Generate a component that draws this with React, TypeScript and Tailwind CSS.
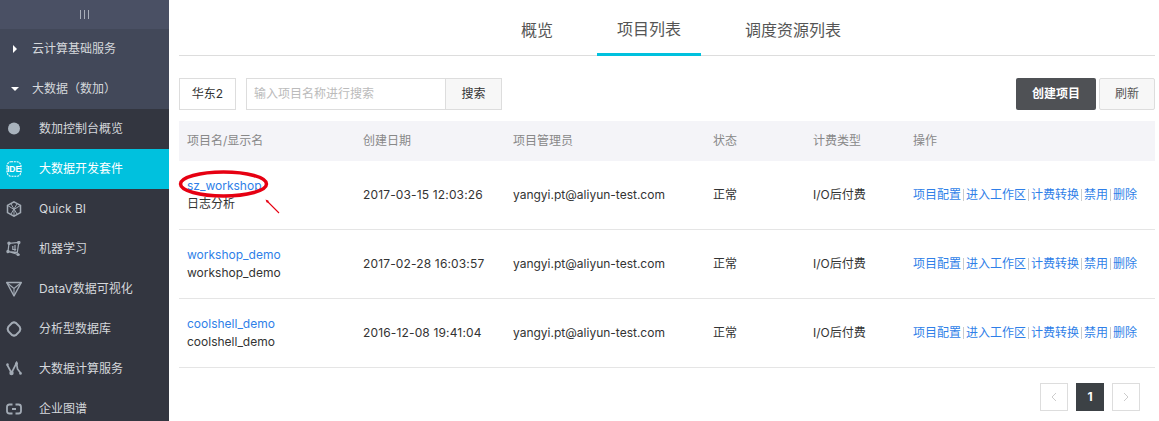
const font = { fontFamily: '"Inter", "Noto Sans CJK SC", sans-serif' }

const rows = [
  { name: 'sz_workshop', display: '日志分析', date: '2017-03-15 12:03:26' },
  { name: 'workshop_demo', display: 'workshop_demo', date: '2017-02-28 16:03:57' },
  { name: 'coolshell_demo', display: 'coolshell_demo', date: '2016-12-08 19:41:04' },
]

const actions = ['项目配置', '进入工作区', '计费转换', '禁用', '删除']

function Caret({ down }: { down?: boolean }) {
  return (
    <svg width="8" height="8" viewBox="0 0 8 8" className="shrink-0" fill="#fff">
      {down ? <path d="M0 2h8L4 6z" /> : <path d="M2 0l4 4-4 4z" />}
    </svg>
  )
}

function NavIcon({ kind }: { kind: string }) {
  const common = { fill: 'none', stroke: '#a3abb5', strokeWidth: 1.4 }
  const dot = '#a3abb5'
  if (kind === 'dot') return <svg width="16" height="16" viewBox="0 0 16 16"><circle cx="8" cy="7.500" r="6" fill="#a9b3bd" /></svg>
  if (kind === 'ide')
    return (
      <svg width="16" height="16" viewBox="0 0 16 16" fill="none" stroke="#fff" strokeWidth="1.100">
        <path d="M5 .8h6q2 0 3 1.500l1 2.200v7l-1 2.200q-1 1.500-3 1.500H5q-2 0-3-1.500L1 11.500v-7l1-2.200Q3 .8 5 .8z" strokeDasharray="2 .8" />
        <text x="8" y="10.800" textAnchor="middle" fontSize="8.500" fontWeight="700" fill="#fff" stroke="none" fontFamily="Liberation Sans, sans-serif">IDE</text>
      </svg>
    )
  if (kind === 'bi')
    return (
      <svg width="16" height="16" viewBox="0 0 16 16" fill="none" stroke={dot} strokeWidth="1.500">
        <path d="M8 .8l6.500 3.600v7.200L8 15.200l-6.500-3.600V4.400z" />
        <path d="M1.500 4.400L8 8.500l6.500-4.100M8 8.500v6.700M4.800 2.600L11.200 13.400M11.200 2.600L4.800 13.400" strokeWidth="1" />
      </svg>
    )
  if (kind === 'ml')
    return (
      <svg width="16" height="16" viewBox="0 0 16 16" {...common} strokeWidth="1.200">
        <path d="M3 2.300l9.800-.8-1.500 9.800-9.300-.8zM2 10.500l11.800 3.500M6.800 5v3.500h3.400M9 4v6" />
        <circle cx="3" cy="2.300" r="1.100" fill={dot} />
        <circle cx="12.800" cy="1.500" r="1.100" fill={dot} />
        <circle cx="2" cy="10.500" r="1.100" fill={dot} />
        <circle cx="12" cy="13.500" r="1.500" fill={dot} stroke="none" />
      </svg>
    )
  if (kind === 'datav')
    return (
      <svg width="16" height="16" viewBox="0 0 16 16" {...common}>
        <path d="M.7 1.500h14.600L8 15z" strokeLinejoin="round" />
        <path d="M.7 1.500L8 7.500l7.300-6M8 7.500V15" strokeWidth="1.100" />
      </svg>
    )
  if (kind === 'db')
    return (
      <svg width="16" height="16" viewBox="0 0 16 16" {...common} strokeWidth="2">
        <path d="M8 1.200l2 .8 3.600 3.600.8 2.400-.8 2.400L10 14l-2 .8-2-.8-3.600-3.600L1.600 8l.8-2.400L6 2z" strokeLinejoin="round" />
      </svg>
    )
  if (kind === 'calc')
    return (
      <svg width="16" height="16" viewBox="0 0 16 16" {...common} strokeWidth="1.700">
        <path d="M1 3.500l4.500 8.500L10.500 2l1 6 3.500 4.500" />
        <circle cx="5.500" cy="12" r="2.200" fill={dot} stroke="none" />
        <circle cx="10.500" cy="2.500" r="1.500" fill={dot} stroke="none" />
        <circle cx="1.500" cy="3.500" r="1.200" fill={dot} stroke="none" />
        <circle cx="14.500" cy="12.500" r="1.300" fill={dot} stroke="none" />
      </svg>
    )
  return (
    <svg width="16" height="16" viewBox="0 0 16 16" {...common} strokeWidth="1.800">
      <path d="M6.500 3.500H3.500Q1 3.500 1 6v4q0 2.500 2.500 2.500h3M9.500 3.500h3Q15 3.500 15 6v4q0 2.500-2.500 2.500h-3M6 8h4" />
    </svg>
  )
}

const navItems = [
  { label: '数加控制台概览', icon: 'dot' },
  { label: '大数据开发套件', icon: 'ide', active: true },
  { label: 'Quick BI', icon: 'bi' },
  { label: '机器学习', icon: 'ml' },
  { label: 'DataV数据可视化', icon: 'datav' },
  { label: '分析型数据库', icon: 'db' },
  { label: '大数据计算服务', icon: 'calc' },
  { label: '企业图谱', icon: 'graph' },
]

export default function App() {
  return (
    <div className="flex h-[421px] w-[1159px] overflow-hidden bg-white text-[12px] text-[#333]" style={font}>
      <aside className="w-[169px] shrink-0 bg-[#333640] text-[#d5d8dc]">
        <div className="flex h-[29px] items-center justify-center bg-[#4a5064]">
          <div className="flex gap-[3px]">
            <span className="h-[9px] w-px bg-[#a9afba]" />
            <span className="h-[9px] w-px bg-[#a9afba]" />
            <span className="h-[9px] w-px bg-[#a9afba]" />
          </div>
        </div>
        <div className="bg-[#424859]">
          <div className="flex h-[40px] items-center pl-[11px]">
            <Caret />
            <span className="ml-[13px]">云计算基础服务</span>
          </div>
          <div className="flex h-[40px] items-center pl-[11px]">
            <Caret down />
            <span className="ml-[13px]">大数据（数加）</span>
          </div>
        </div>
        {navItems.map(item => (
          <div key={item.label} className={`flex h-[40px] items-center pl-[6px] ${item.active ? 'bg-[#00c1de] text-white' : ''}`}>
            <NavIcon kind={item.icon} />
            <span className="ml-[17px]">{item.label}</span>
          </div>
        ))}
      </aside>

      <main className="relative min-w-0 flex-1 pl-[10px] pr-[4px]">
        <div className="flex h-[56px] justify-center gap-[24px] border-b border-[#ddd] pl-[28px] text-[16px] text-[#555]">
          <div className="flex h-[56px] items-center px-[20px] pt-[4px]">概览</div>
          <div className="flex h-[56px] items-center border-b-[3px] border-[#00c1de] px-[20px] pt-[4px]">项目列表</div>
          <div className="flex h-[56px] items-center px-[20px] pt-[4px]">调度资源列表</div>
        </div>

        <div className="mt-[22px] flex h-[32px] items-stretch">
          <div className="flex w-[57px] items-center justify-center border border-[#ddd]">华东2</div>
          <input
            readOnly
            placeholder="输入项目名称进行搜索"
            className="ml-[10px] w-[200px] border border-[#ddd] px-[7px] text-[12px] outline-none placeholder:text-[#bbb]"
          />
          <div className="flex w-[56px] items-center justify-center border border-l-0 border-[#ddd] bg-[#f7f7f7]">搜索</div>
          <div className="ml-auto flex w-[80px] items-center justify-center rounded-[2px] bg-[#4f5155] font-bold text-white">创建项目</div>
          <div className="ml-[3px] flex w-[56px] items-center justify-center rounded-[2px] border border-[#ddd] bg-[#f7f7f7] text-[#555]">刷新</div>
        </div>

        <table className="mt-[11px] w-full table-fixed border-separate border-spacing-0">
          <thead>
            <tr className="h-[40px] bg-[#f4f4f8] text-left text-[#888]">
              <th className="w-[176px] pl-[8px] font-normal">项目名/显示名</th>
              <th className="w-[150px] pl-[8px] font-normal">创建日期</th>
              <th className="w-[200px] pl-[8px] font-normal">项目管理员</th>
              <th className="w-[100px] pl-[8px] font-normal">状态</th>
              <th className="w-[100px] pl-[8px] font-normal">计费类型</th>
              <th className="pl-[8px] font-normal">操作</th>
            </tr>
          </thead>
          <tbody>
            {rows.map(row => (
              <tr key={row.name} className="h-[69px] [&>td]:border-b [&>td]:border-[#e5e5e5] [&>td]:pl-[8px]">
                <td className="leading-[18px]">
                  <div className="text-[#2f7fe8]">{row.name}</div>
                  <div>{row.display}</div>
                </td>
                <td className="tracking-[0.15px]">{row.date}</td>
                <td>yangyi.pt@aliyun-test.com</td>
                <td>正常</td>
                <td>I/O后付费</td>
                <td className="whitespace-nowrap text-[#2f7fe8]">
                  <div className="flex items-center">
                    {actions.map((a, i) => (
                      <span key={a} className="flex items-center">
                        {i > 0 && <span className="mx-[2px] h-[12px] w-px bg-[#ccc]" />}
                        {a}
                      </span>
                    ))}
                  </div>
                </td>
              </tr>
            ))}
          </tbody>
        </table>

        <div className="mt-[15px] flex justify-end gap-[8px] pr-[15px]">
          <div className="flex h-[28px] w-[28px] items-center justify-center border border-[#ddd]">
            <svg width="8" height="10" viewBox="0 0 8 10" fill="none" stroke="#ccc"><path d="M6 1L2 5l4 4" /></svg>
          </div>
          <div className="flex h-[28px] w-[28px] items-center justify-center bg-[#3c4145] font-bold text-white">1</div>
          <div className="flex h-[28px] w-[28px] items-center justify-center border border-[#ddd]">
            <svg width="8" height="10" viewBox="0 0 8 10" fill="none" stroke="#ccc"><path d="M2 1l4 4-4 4" /></svg>
          </div>
        </div>

        <svg className="pointer-events-none absolute left-0 top-0" width="130" height="230" fill="none" stroke="#e60012">
          <ellipse cx="54.500" cy="184" rx="43" ry="12" strokeWidth="3.500" />
          <path d="M97.500 200.500L110 213" strokeWidth="1.100" />
          <path d="M96.500 199.500l3.500 1.500-2 2z" fill="#e60012" stroke="none" />
        </svg>
      </main>
    </div>
  )
}
